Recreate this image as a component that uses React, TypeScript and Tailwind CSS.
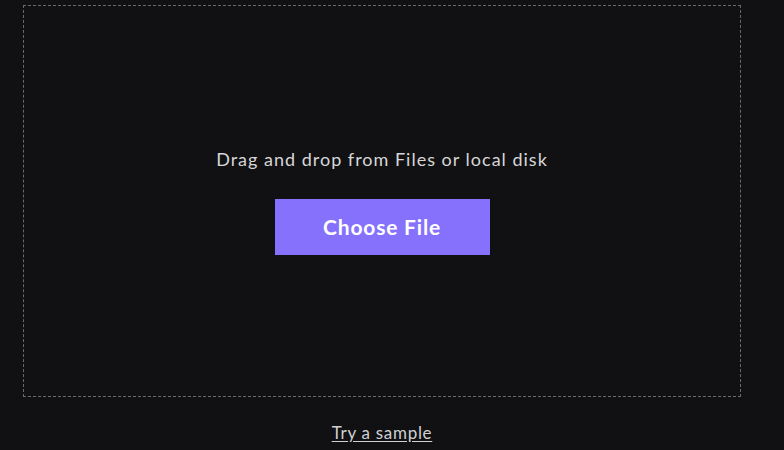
export default function App() {
  return (
    <div
      className="w-[784px] h-[450px] bg-[#111113] pl-[23px] pr-[43px] pt-[5px] flex flex-col"
      style={{ fontFamily: '"Lato", "Open Sans", sans-serif' }}
    >
      {/* Drop zone */}
      <div className="h-[392px] border border-dashed border-[#6a6a6e] flex flex-col items-center justify-center">
        <p className="text-[18px] leading-[24px] tracking-[1px] text-[#d6d6d8]">
          Drag and drop from Files or local disk
        </p>

        <button
          type="button"
          className="mt-[28px] w-[215px] h-[56px] bg-[#8571fc] text-white text-[21px] font-bold tracking-[0.8px]"
        >
          Choose File
        </button>
      </div>

      <div className="flex justify-center mt-[25px]">
        <a href="#" className="text-[17px] leading-[22px] tracking-[0.7px] text-[#d0d0d2] underline underline-offset-2">
          Try a sample
        </a>
      </div>
    </div>
  );
}
